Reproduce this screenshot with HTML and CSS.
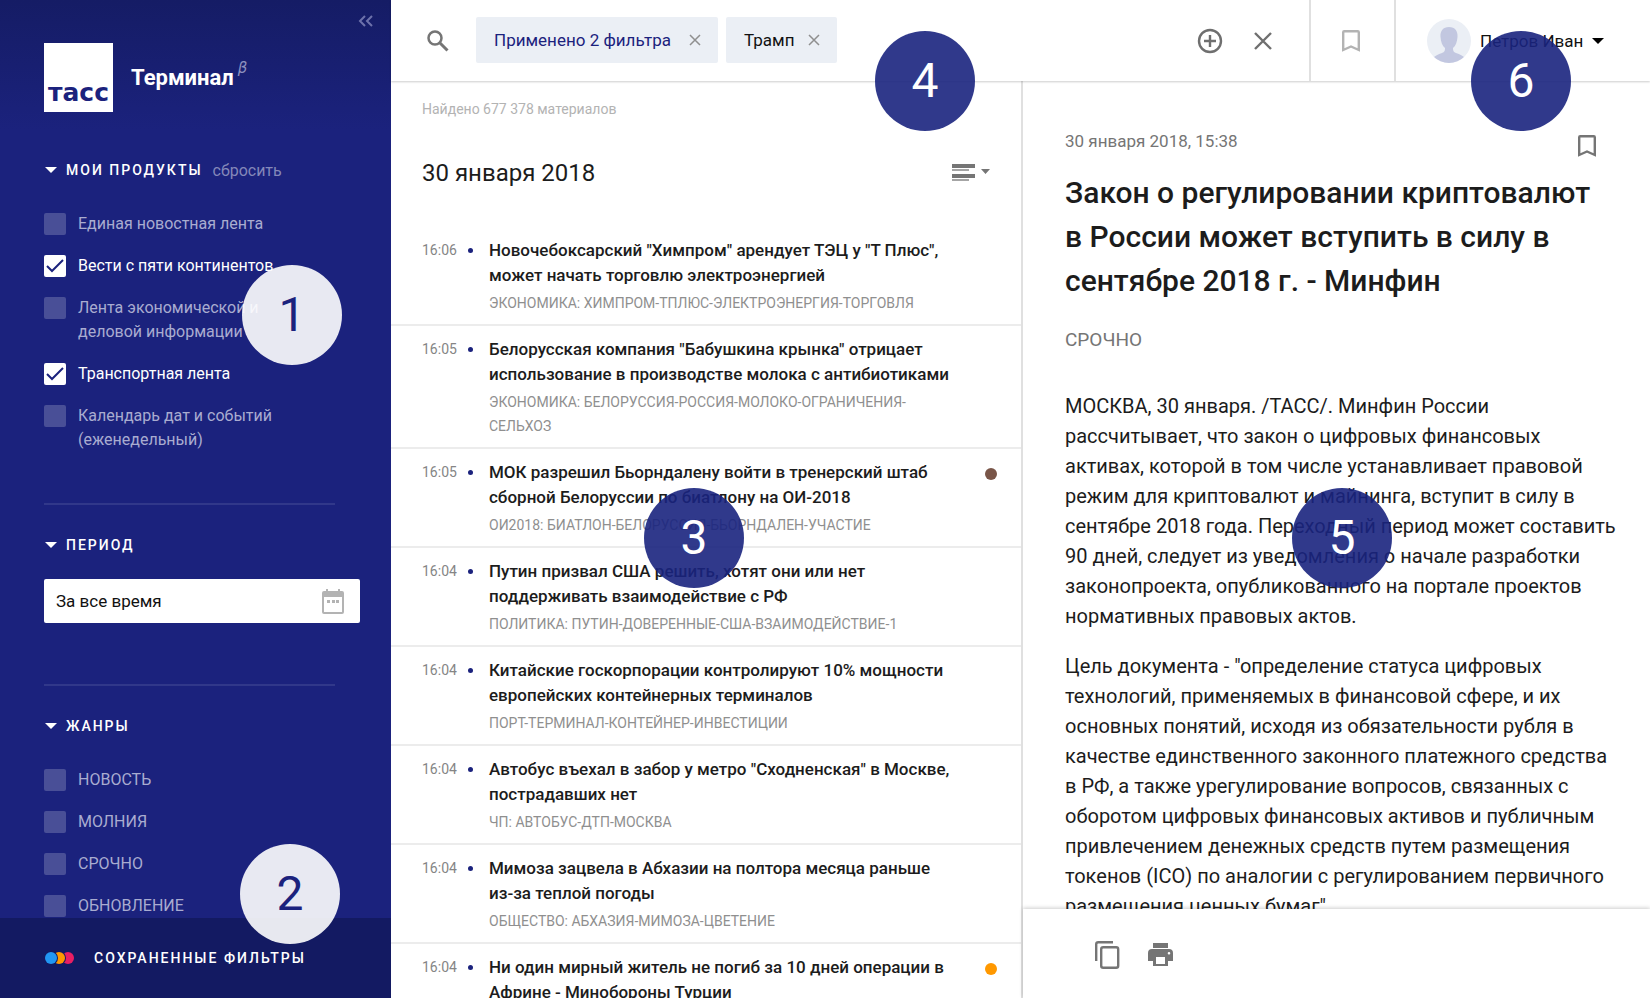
FILE: index.html
```html
<!DOCTYPE html>
<html lang="ru">
<head>
<meta charset="utf-8">
<title>ТАСС Терминал</title>
<link rel="stylesheet" href="styles.css">
</head>
<body>
<div class="app">
  <aside class="sidebar">
    <div class="sidebar-scroll">
      <button class="collapse" type="button" aria-label="Свернуть панель">
        <svg width="16" height="12" viewBox="0 0 16 12"><path d="M7 1 2 6l5 5M14 1 9 6l5 5"/></svg>
      </button>
      <div class="brand">
        <a class="logo" href="#">тасс</a>
        <span class="brand-name">Терминал</span>
        <span class="beta">β</span>
      </div>

      <section class="group">
        <div class="group-head">
          <button class="group-title" type="button"><i class="caret"></i>МОИ ПРОДУКТЫ</button>
          <button class="reset" type="button">сбросить</button>
        </div>
        <label class="check"><input type="checkbox"><span>Единая новостная лента</span></label>
        <label class="check"><input type="checkbox" checked><span>Вести с пяти континентов</span></label>
        <label class="check"><input type="checkbox"><span>Лента экономической и<br>деловой информации</span></label>
        <label class="check"><input type="checkbox" checked><span>Транспортная лента</span></label>
        <label class="check"><input type="checkbox"><span>Календарь дат и событий<br>(еженедельный)</span></label>
      </section>

      <section class="group period">
        <div class="group-head">
          <button class="group-title" type="button"><i class="caret"></i>ПЕРИОД</button>
        </div>
        <div class="date-field">
          <input type="text" value="За все время" aria-label="Период">
          <svg width="22" height="25" viewBox="0 0 22 25"><path fill-rule="evenodd" d="M4 0h2v2h10V0h2v2h2a2 2 0 0 1 2 2v19a2 2 0 0 1-2 2H2a2 2 0 0 1-2-2V4a2 2 0 0 1 2-2h2zM2 8v15h18V8zM5 11h3v3H5zM10 11h3v3h-3zM14 11h3v3h-3z"/></svg>
        </div>
      </section>

      <section class="group genres">
        <div class="group-head">
          <button class="group-title" type="button"><i class="caret"></i>ЖАНРЫ</button>
        </div>
        <label class="check"><input type="checkbox"><span>НОВОСТЬ</span></label>
        <label class="check"><input type="checkbox"><span>МОЛНИЯ</span></label>
        <label class="check"><input type="checkbox"><span>СРОЧНО</span></label>
        <label class="check"><input type="checkbox"><span>ОБНОВЛЕНИЕ</span></label>
      </section>
    </div>
    <button class="saved" type="button">
      <svg width="30" height="14" viewBox="0 0 30 14"><circle cx="23" cy="7" r="6" fill="#e91e63"/><circle cx="14" cy="7" r="7" fill="#131a62"/><circle cx="14" cy="7" r="6" fill="#ff9800"/><circle cx="6" cy="7" r="7" fill="#131a62"/><circle cx="6" cy="7" r="6" fill="#2196f3"/></svg>
      СОХРАНЕННЫЕ ФИЛЬТРЫ
    </button>
  </aside>

  <main class="main">
    <header class="topbar">
      <div class="search">
        <button class="icon search-icon" type="button" aria-label="Поиск">
          <svg width="22" height="22" viewBox="0 0 22 22"><circle cx="8" cy="8" r="6.500" fill="none" stroke="#757575" stroke-width="2.500"/><path d="m13 13 7.500 7.500" stroke="#757575" stroke-width="3"/></svg>
        </button>
        <span class="chip chip-filter">Применено 2 фильтра <button type="button" aria-label="Убрать фильтры"><svg width="12" height="12" viewBox="0 0 12 12"><path d="m1 1 10 10M11 1 1 11"/></svg></button></span>
        <span class="chip">Трамп <button type="button" aria-label="Убрать Трамп"><svg width="12" height="12" viewBox="0 0 12 12"><path d="m1 1 10 10M11 1 1 11"/></svg></button></span>
      </div>
      <div class="actions">
        <button class="icon" type="button" aria-label="Добавить"><svg width="26" height="26" viewBox="0 0 26 26" fill="none" stroke="#6f6f6f" stroke-width="2.400"><circle cx="13" cy="13" r="11"/><path d="M13 7v12M7 13h12"/></svg></button>
        <button class="icon" type="button" aria-label="Очистить"><svg width="18" height="18" viewBox="0 0 18 18" fill="none" stroke="#6f6f6f" stroke-width="2.400"><path d="m1 1 16 16M17 1 1 17"/></svg></button>
      </div>
      <div class="marks">
        <button class="icon" type="button" aria-label="Закладки"><svg width="18" height="22" viewBox="0 0 18 22" fill="none" stroke="#b3b3b3" stroke-width="2.400"><path d="M1.200 20V2.200q0-1 1-1h13.600q1 0 1 1V20L9 16.500z"/></svg></button>
      </div>
      <button class="user" type="button">
        <svg width="44" height="44" viewBox="0 0 44 44"><clipPath id="round"><circle cx="22" cy="22" r="22"/></clipPath><g clip-path="url(#round)"><path fill="#ebeff5" d="M0 0h44v44H0z"/><path fill="#c2c7e0" d="M22 8c6 0 9 4 8.500 10-.3 5-2 9-4.500 11 0 3 .5 4 3 5 4 1.500 7 2.500 9 5v5H6v-5c2-2.500 5-3.500 9-5 2.500-1 3-2 3-5-2.500-2-4.200-6-4.500-11C13 12 16 8 22 8z"/></g></svg>
        <span>Петров Иван</span>
        <i class="caret caret-dark"></i>
      </button>
    </header>

    <div class="content">
      <section class="feed">
        <p class="found">Найдено 677 378 материалов</p>
        <div class="day">
          <h2>30 января 2018</h2>
          <button class="sort" type="button" aria-label="Вид списка">
            <svg width="38" height="18" viewBox="0 0 38 18"><path fill="#757575" d="M0 0h23v4H0zM0 10h23v4H0zM29 5h9l-4.500 5z"/><path fill="#a5a5a5" d="M0 5h17v2H0zM0 15h17v2H0z"/></svg>
          </button>
        </div>
        <article class="item"><time>16:06</time><i class="bullet"></i><div><h3>Новочебоксарский "Химпром" арендует ТЭЦ у "Т Плюс",<br>может начать торговлю электроэнергией</h3><p>ЭКОНОМИКА: ХИМПРОМ-ТПЛЮС-ЭЛЕКТРОЭНЕРГИЯ-ТОРГОВЛЯ</p></div></article>
        <article class="item"><time>16:05</time><i class="bullet"></i><div><h3>Белорусская компания "Бабушкина крынка" отрицает<br>использование в производстве молока с антибиотиками</h3><p>ЭКОНОМИКА: БЕЛОРУССИЯ-РОССИЯ-МОЛОКО-ОГРАНИЧЕНИЯ-<br>СЕЛЬХОЗ</p></div></article>
        <article class="item"><time>16:05</time><i class="bullet"></i><div><h3>МОК разрешил Бьорндалену войти в тренерский штаб<br>сборной Белоруссии по биатлону на ОИ-2018</h3><p>ОИ2018: БИАТЛОН-БЕЛОРУССИЯ-БЬОРНДАЛЕН-УЧАСТИЕ</p></div><i class="flag brown"></i></article>
        <article class="item"><time>16:04</time><i class="bullet"></i><div><h3>Путин призвал США решить, хотят они или нет<br>поддерживать взаимодействие с РФ</h3><p>ПОЛИТИКА: ПУТИН-ДОВЕРЕННЫЕ-США-ВЗАИМОДЕЙСТВИЕ-1</p></div></article>
        <article class="item"><time>16:04</time><i class="bullet"></i><div><h3>Китайские госкорпорации контролируют 10% мощности<br>европейских контейнерных терминалов</h3><p>ПОРТ-ТЕРМИНАЛ-КОНТЕЙНЕР-ИНВЕСТИЦИИ</p></div></article>
        <article class="item"><time>16:04</time><i class="bullet"></i><div><h3>Автобус въехал в забор у метро "Сходненская" в Москве,<br>пострадавших нет</h3><p>ЧП: АВТОБУС-ДТП-МОСКВА</p></div></article>
        <article class="item"><time>16:04</time><i class="bullet"></i><div><h3>Мимоза зацвела в Абхазии на полтора месяца раньше<br>из-за теплой погоды</h3><p>ОБЩЕСТВО: АБХАЗИЯ-МИМОЗА-ЦВЕТЕНИЕ</p></div></article>
        <article class="item"><time>16:04</time><i class="bullet"></i><div><h3>Ни один мирный житель не погиб за 10 дней операции в<br>Африне - Минобороны Турции</h3></div><i class="flag orange"></i></article>
      </section>

      <section class="detail">
        <div class="story">
          <div class="story-meta">
            <time>30 января 2018, 15:38</time>
            <button class="icon" type="button" aria-label="В закладки"><svg width="18" height="22" viewBox="0 0 18 22" fill="none" stroke="#757575" stroke-width="2.400"><path d="M1.200 20V2.200q0-1 1-1h13.600q1 0 1 1V20L9 16.500z"/></svg></button>
          </div>
          <h1>Закон о регулировании криптовалют<br>в России может вступить в силу в<br>сентябре 2018 г. - Минфин</h1>
          <p class="urgency">СРОЧНО</p>
          <p class="text">МОСКВА, 30 января. /ТАСС/. Минфин России<br>рассчитывает, что закон о цифровых финансовых<br>активах, которой в том числе устанавливает правовой<br>режим для криптовалют и майнинга, вступит в силу в<br>сентябре 2018 года. Переходный период может составить<br>90 дней, следует из уведомления о начале разработки<br>законопроекта, опубликованного на портале проектов<br>нормативных правовых актов.</p>
          <p class="text">Цель документа - "определение статуса цифровых<br>технологий, применяемых в финансовой сфере, и их<br>основных понятий, исходя из обязательности рубля в<br>качестве единственного законного платежного средства<br>в РФ, а также урегулирование вопросов, связанных с<br>оборотом цифровых финансовых активов и публичным<br>привлечением денежных средств путем размещения<br>токенов (ICO) по аналогии с регулированием первичного<br>размещения ценных бумаг"</p>
        </div>
        <footer class="tools">
          <button class="icon" type="button" aria-label="Копировать"><svg width="25" height="28" viewBox="0 0 25 28" fill="none" stroke="#757575" stroke-width="2.400"><path d="M1.200 20V3.200q0-2 2-2H18"/><rect x="6.200" y="6.200" width="17" height="20.600" rx="2"/></svg></button>
          <button class="icon" type="button" aria-label="Печать"><svg width="26" height="24" viewBox="0 0 26 24"><path fill="#757575" fill-rule="evenodd" d="M5 0h15v5H5zM4 6h17a4 4 0 0 1 4 4v8h-5v5H5v-5H0v-8a4 4 0 0 1 4-4zM8 14v7h9v-7zM21 9a1.300 1.300 0 1 0 0 2.600 1.300 1.300 0 1 0 0-2.600z"/></svg></button>
        </footer>
      </section>
    </div>
  </main>

  <span class="pin light pin-1">1</span>
  <span class="pin light pin-2">2</span>
  <span class="pin pin-3">3</span>
  <span class="pin pin-4">4</span>
  <span class="pin pin-5">5</span>
  <span class="pin pin-6">6</span>
</div>
</body>
</html>
```

FILE: styles.css
```css
* { box-sizing: border-box; }
body { margin: 0; font-family: Roboto, "Noto Sans", sans-serif; color: #1c1c1c; background: #fff; }
h1, h2, h3, p { margin: 0; font-weight: 400; }
button { margin: 0; padding: 0; border: 0; background: none; font: inherit; color: inherit; cursor: pointer; }
svg { display: block; flex: none; }

.app { position: relative; display: flex; height: 100vh; overflow: hidden; }

/* Sidebar */
.sidebar { flex: none; width: 391px; display: flex; flex-direction: column; color: #fff; background: linear-gradient(#151c65, #1b227d 130px); }
.sidebar-scroll { flex: 1; min-height: 0; overflow: hidden; padding: 15px 31px 0 44px; }
.collapse { display: block; margin: 0 -14px 0 auto; }
.collapse path { fill: none; stroke: #6d72ab; stroke-width: 2; }
.brand { display: flex; align-items: center; height: 69px; margin-top: 16px; }
.logo { display: flex; align-items: flex-end; justify-content: center; width: 69px; height: 69px; padding-bottom: 5px; background: #fff; color: #1b227d; font: bold 25px/28px "DejaVu Sans", sans-serif; text-decoration: none; }
.brand-name { margin-left: 18px; font-size: 22px; font-weight: 700; }
.beta { margin: 0 0 20px 4px; color: #8d91bf; font: italic 15px/20px "DejaVu Sans", sans-serif; }

.group { display: flex; flex-direction: column; gap: 18px; padding-top: 46px; }
.group-head { display: flex; align-items: center; gap: 10px; height: 24px; margin-bottom: 12px; }
.group-title { display: flex; align-items: center; gap: 9px; padding-left: 1px; font-size: 14px; font-weight: 500; letter-spacing: 2px; }
.caret { width: 0; height: 0; border: 6px solid transparent; border-top-color: #fff; border-bottom: 0; }
.reset { color: #8488b9; font-size: 16px; }
.check { display: flex; gap: 12px; color: #a9acd0; font-size: 16px; line-height: 24px; }
.check input { appearance: none; flex: none; width: 22px; height: 22px; margin: 1px 0 0; border-radius: 2px; background: #494f97; }
.check input:checked { background: #fff url("data:image/svg+xml,%3Csvg xmlns='http://www.w3.org/2000/svg' viewBox='0 0 22 22'%3E%3Cpath d='M3 11l5 5L19 5' fill='none' stroke='%231b227d' stroke-width='2'/%3E%3C/svg%3E"); }
.check:has(:checked) { color: #fff; }

.period, .genres { padding-top: 30px; }
.period::before, .genres::before { content: ""; width: 291px; height: 2px; margin-bottom: -18px; background: #31388a; }
.period { margin-top: 21px; }
.date-field { display: flex; align-items: center; height: 44px; padding: 0 16px 0 12px; border-radius: 2px; background: #fff; }
.date-field input { flex: 1; min-width: 0; padding: 0; border: 0; font: 17px/24px Roboto, sans-serif; color: #111; }
.date-field svg { fill: #b3b3b3; }
.period .group-head, .genres .group-head { margin-top: 28px; }
.period .group-head { margin-bottom: 4px; }
.genres { padding-top: 61px; }

.saved { flex: none; display: flex; align-items: center; gap: 19px; height: 80px; padding-left: 45px; background: #131a62; font-size: 14px; font-weight: 500; letter-spacing: 2px; }

/* Top bar */
.main { flex: 1; min-width: 0; display: flex; flex-direction: column; }
.topbar { position: relative; z-index: 1; flex: none; display: flex; height: 81px; background: #fff; box-shadow: 0 1px 2px #0003; }
.search { flex: 1; display: flex; align-items: center; gap: 8px; padding-left: 36px; }
.search-icon { margin-right: 19px; }
.chip { display: flex; align-items: center; gap: 14px; height: 46px; margin-bottom: 2px; padding: 0 17px 0 18px; border-radius: 2px; background: #ebeff5; color: #111; font-size: 17px; }
.chip-filter { gap: 18px; color: #1b227d; }
.chip path { fill: none; stroke: #8f8f8f; stroke-width: 1.5; }
.actions { display: flex; align-items: center; gap: 31px; padding-right: 37px; }
.marks { display: flex; align-items: center; justify-content: center; width: 87px; padding-right: 4px; border: solid #e0e0e0; border-width: 0 2px; }
.user { display: flex; align-items: center; width: 254px; padding-left: 31px; gap: 9px; font-size: 17px; color: #111; }
.caret-dark { border-top-color: #000; }

/* Feed */
.content { flex: 1; min-height: 0; display: grid; grid-template-columns: minmax(0, 632fr) minmax(0, 627fr); }
.feed { overflow: hidden; border-right: 2px solid #e0e0e0; }
.found { padding: 16px 31px 0; color: #b3b3b3; font-size: 14px; line-height: 24px; }
.day { display: flex; align-items: center; justify-content: space-between; padding: 36px 31px 38px; }
.day h2 { font-size: 24px; line-height: 32px; }
.item { display: flex; padding: 11px 24px 9px 31px; border-bottom: 2px solid #ececec; }
.item time { flex: none; width: 46px; color: #858585; font-size: 14px; line-height: 25px; }
.bullet { flex: none; width: 5px; height: 5px; margin: 10px 16px 0 0; border-radius: 50%; background: #1b227d; }
.item div { flex: 1; min-width: 0; white-space: nowrap; }
.item h3 { font-size: 17px; font-weight: 500; line-height: 25px; }
.item p { margin-top: 3px; color: #8f8f8f; font-size: 14px; line-height: 24px; }
.flag { flex: none; width: 12px; height: 12px; margin-top: 8px; border-radius: 50%; }
.brown { background: #795548; }
.orange { background: #ff9800; }

/* Story */
.detail { display: flex; flex-direction: column; min-height: 0; }
.story { flex: 1; min-height: 0; overflow: hidden; padding: 48px 42px 0; white-space: nowrap; }
.story-meta { display: flex; justify-content: space-between; padding-right: 12px; color: #757575; font-size: 17px; line-height: 24px; }
.story-meta svg { margin-top: 6px; }
.story h1 { margin-top: 14px; font-size: 30px; font-weight: 500; line-height: 44px; }
.urgency { margin: 25px 0 39px; color: #757575; font-size: 19px; line-height: 24px; }
.text { margin-bottom: 20px; font-size: 20px; line-height: 30px; }
.tools { position: relative; flex: none; display: flex; align-items: center; gap: 28px; height: 89px; padding: 2px 72px 0; background: #fff; box-shadow: 0 -1px 4px #0003; }

/* Numbered pins */
.pin { position: absolute; z-index: 2; display: flex; align-items: center; justify-content: center; width: 100px; height: 100px; border-radius: 50%; background: rgba(26, 35, 126, .9); color: #fff; font: 48px/56px Roboto, sans-serif; }
.light { background: rgba(255, 255, 255, .9); color: #1b227d; }
.pin-1 { left: 242px; top: 265px; }
.pin-2 { left: 240px; top: 844px; }
.pin-3 { left: 644px; top: 488px; }
.pin-4 { left: 875px; top: 31px; }
.pin-5 { left: 1292px; top: 488px; }
.pin-6 { left: 1471px; top: 31px; }
```
